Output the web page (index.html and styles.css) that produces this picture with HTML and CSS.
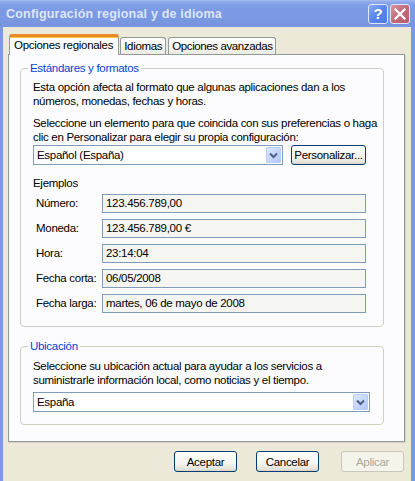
FILE: index.html
```html
<!DOCTYPE html>
<html lang="es">
<head>
<meta charset="utf-8">
<title>Configuración regional y de idioma</title>
<link rel="stylesheet" href="styles.css">
</head>
<body>
<div class="window">
  <div class="titlebar">
    <span class="title">Configuración regional y de idioma</span>
    <div class="tbtns">
      <span class="tb help">?</span>
      <span class="tb close"><svg width="12" height="12" viewBox="0 0 12 12"><path d="M1.5 1.5 L10.5 10.5 M10.5 1.5 L1.5 10.5" stroke="#fff" stroke-width="2.2" stroke-linecap="square"/></svg></span>
    </div>
  </div>
  <div class="client">
    <div class="tabs">
      <div class="tab active">Opciones regionales</div>
      <div class="tab">Idiomas</div>
      <div class="tab adv">Opciones avanzadas</div>
    </div>
    <div class="panel">
      <fieldset class="group g1">
        <legend>Estándares y formatos</legend>
        <p class="desc first">Esta opción afecta al formato que algunas aplicaciones dan a los<br>números, monedas, fechas y horas.</p>
        <p class="desc second">Seleccione un elemento para que coincida con sus preferencias o haga<br>clic en Personalizar para elegir su propia configuración:</p>
        <div class="combo-row">
          <div class="combo short"><span class="combo-text">Español (España)</span><span class="arrow"><svg width="9" height="7" viewBox="0 0 9 7"><path d="M1 1.5 L4.5 5 L8 1.5" fill="none" stroke="#4d6185" stroke-width="2"/></svg></span></div>
          <button class="btn custom">Personalizar...</button>
        </div>
        <div class="examples-title">Ejemplos</div>
        <div class="examples">
          <div class="row"><span class="label">Número:</span><span class="field">123.456.789,00</span></div>
          <div class="row"><span class="label">Moneda:</span><span class="field">123.456.789,00 €</span></div>
          <div class="row"><span class="label">Hora:</span><span class="field">23:14:04</span></div>
          <div class="row"><span class="label">Fecha corta:</span><span class="field">06/05/2008</span></div>
          <div class="row"><span class="label">Fecha larga:</span><span class="field">martes, 06 de mayo de 2008</span></div>
        </div>
      </fieldset>
      <fieldset class="group g2">
        <legend>Ubicación</legend>
        <p class="desc loc">Seleccione su ubicación actual para ayudar a los servicios a<br>suministrarle información local, como noticias y el tiempo.</p>
        <div class="combo wide"><span class="combo-text">España</span><span class="arrow"><svg width="9" height="7" viewBox="0 0 9 7"><path d="M1 1.5 L4.5 5 L8 1.5" fill="none" stroke="#4d6185" stroke-width="2"/></svg></span></div>
      </fieldset>
    </div>
    <div class="buttons">
      <button class="btn dlg">Aceptar</button>
      <button class="btn dlg cancel">Cancelar</button>
      <button class="btn dlg apply" disabled>Aplicar</button>
    </div>
  </div>
</div>
</body>
</html>
```
FILE: styles.css
```css
html, body {
  margin: 0;
  padding: 0;
}
body {
  width: 415px;
  height: 481px;
  overflow: hidden;
  font-family: "Liberation Sans", Arial, sans-serif;
  font-size: 11.5px;
  letter-spacing: -0.3px;
  color: #000;
  background: #ece9d8;
}
.window {
  height: 481px;
  display: flex;
  flex-direction: column;
  background: #7c99e2;
}
.titlebar {
  flex: none;
  height: 27px;
  display: flex;
  align-items: center;
  padding: 0 5px 0 6px;
  background: linear-gradient(#a9bdf1 0, #8da8ec 2px, #7f9ce6 5px, #7b98e3 60%, #7794df 100%);
}
.title {
  flex: 1;
  padding-top: 1px;
  color: #dde6f8;
  font-weight: bold;
  font-size: 12.5px;
  letter-spacing: 0.2px;
  white-space: nowrap;
}
.tbtns {
  display: flex;
  gap: 2px;
}
.tb {
  width: 18px;
  height: 18px;
  border: 1px solid #dfe7fb;
  border-radius: 3px;
  display: flex;
  align-items: center;
  justify-content: center;
  color: #fff;
  font-weight: bold;
  font-size: 15px;
  font-family: "Liberation Sans", Arial, sans-serif;
}
.help {
  background: linear-gradient(135deg, #8aa9f2, #5a85ea 50%, #4f7ae4);
}
.close {
  background: linear-gradient(135deg, #d8939c, #c46a78 50%, #b85a6a);
}
.client {
  flex: 1;
  margin: 0 4px 0 3px;
  background: #ece9d8;
  padding-top: 7px;
}
.tabs {
  display: flex;
  align-items: flex-end;
  height: 20px;
  margin-left: 6px;
}
.tab {
  height: 16px;
  line-height: 16px;
  padding: 0 3px;
  border: 1px solid #919b9c;
  border-bottom: none;
  border-radius: 3px 3px 0 0;
  background: linear-gradient(#ffffff, #f3f2ec 70%, #e9e8e1);
  margin-right: 2px;
  white-space: nowrap;
}
.tab.adv {
  padding: 0 2px 0 3px;
  letter-spacing: -0.4px;
}
.tab.active {
  line-height: 16px;
  padding: 0 5px 2px 4px;
  box-sizing: content-box;
  height: 16px;
  border-top: 3px solid #e68b2c;
  box-shadow: inset 0 1px 0 #ffc73c;
  background: #fcfcfe;
  margin-bottom: -1px;
  margin-right: 1px;
  position: relative;
  z-index: 1;
}
.panel {
  margin-left: 5px;
  width: 364px;
  border: 1px solid #919b9c;
  background: #fcfcfe;
  padding: 0 20px 16px 11px;
  box-shadow: 1px 1px 0 #d5d2c5;
}
.group {
  margin: 6px 0 0;
  padding: 0 11px 13px 12px;
  border: 1px solid #d0d0bf;
  border-radius: 4px;
  min-width: 0;
}
.group.g2 {
  margin-top: 12px;
  padding-bottom: 12px;
}
legend {
  padding: 0 2px;
  margin-left: -5px;
  color: #0046d5;
  line-height: 14px;
}
.desc {
  margin: 5px 0 0;
  line-height: 14px;
  white-space: nowrap;
}
.desc.second {
  margin-top: 8px;
}
.desc.loc {
  margin-top: 6px;
}
.combo-row {
  display: flex;
  gap: 8px;
  margin-top: 1px;
}
.combo {
  box-sizing: border-box;
  height: 20px;
  border: 1px solid #7f9db9;
  background: #fff;
  display: flex;
  align-items: center;
  padding: 1px;
}
.combo.short {
  width: 250px;
}
.combo.wide {
  width: 337px;
  margin-top: 5px;
}
.combo-text {
  flex: 1;
  padding-left: 2px;
  line-height: 14px;
}
.arrow {
  width: 15px;
  height: 16px;
  box-sizing: border-box;
  border: 1px solid #b9cdf6;
  border-radius: 1px;
  background: linear-gradient(135deg, #dce7fd, #c2d4fb 60%, #b3c8f6);
  display: flex;
  align-items: center;
  justify-content: center;
}
.btn {
  box-sizing: border-box;
  border: 1px solid #003c74;
  border-radius: 3px;
  background: linear-gradient(#ffffff, #f5f4ef 60%, #e6e3d8 90%, #d6d0c5);
  font-family: inherit;
  font-size: inherit;
  letter-spacing: inherit;
  color: #000;
  padding: 0;
  line-height: 14px;
}
.btn.custom {
  width: 75px;
  height: 20px;
}
.examples-title {
  margin-top: 11px;
  line-height: 14px;
}
.examples {
  margin-top: 4px;
  display: flex;
  flex-direction: column;
  gap: 6px;
}
.row {
  display: flex;
  height: 19px;
}
.label {
  width: 66px;
  padding: 2px 0 0 3px;
  line-height: 14px;
  white-space: nowrap;
}
.field {
  box-sizing: border-box;
  width: 264px;
  height: 19px;
  border: 1px solid #7f9db9;
  background: #f5f5f2;
  padding-left: 3px;
  line-height: 17px;
  white-space: nowrap;
}
.buttons {
  display: flex;
  justify-content: flex-end;
  margin-top: 9px;
  padding-right: 7px;
}
.btn.dlg {
  width: 63px;
  height: 21px;
}
.btn.cancel {
  margin-left: 19px;
}
.btn.apply {
  margin-left: 22px;
  border-color: #c9c7ba;
  background: #f5f4ea;
  color: #aca899;
}
```
